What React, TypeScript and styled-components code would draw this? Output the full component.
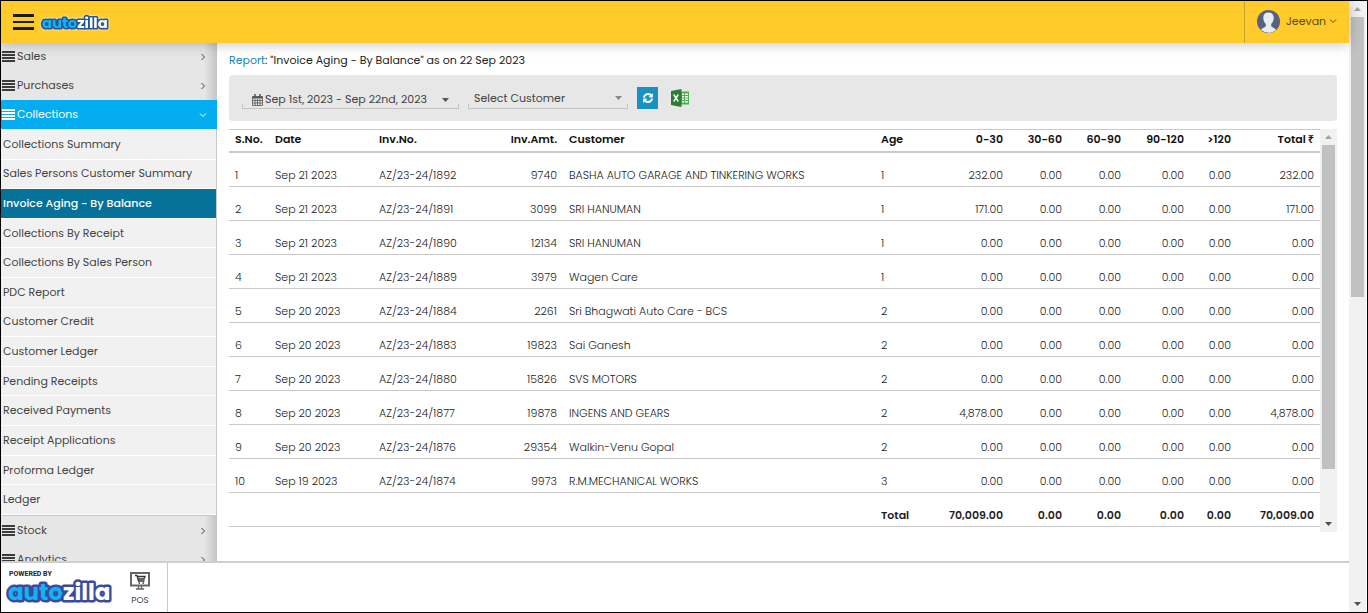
import React from 'react';
import styled, { createGlobalStyle, css } from 'styled-components';

const Global = createGlobalStyle`
  * { box-sizing: border-box; }
  body { margin: 0; background: #fff; font-family: Poppins, Inter, sans-serif; color: #444; }
  button, select { font: inherit; color: inherit; background: none; border: 0; padding: 0; margin: 0; }
  a { color: inherit; text-decoration: none; }
  ul { list-style: none; margin: 0; padding: 0; }
`;

const Page = styled.div`
  display: flex;
  height: 100vh;
  border: 1px solid #000;
  overflow: hidden;
`;
const Shell = styled.div`
  flex: 1;
  min-width: 0;
  display: flex;
  flex-direction: column;
`;
const Header = styled.header`
  flex: none;
  height: 42px;
  display: flex;
  align-items: center;
  gap: 6px;
  padding-left: 12px;
  background: #ffcb2b;
  box-shadow: 0 1px 12px rgba(0, 0, 0, 0.25);
  z-index: 1;
`;
const IconButton = styled.button`
  display: flex;
  align-items: center;
`;
const UserButton = styled.button`
  margin-left: auto;
  height: 100%;
  width: 105px;
  display: flex;
  align-items: center;
  padding: 0 0 2px 12px;
  gap: 6px;
  border-left: 1px solid #c9a22b;
  font-size: 11px;
  color: #5c4c1c;
  svg:last-child { margin-left: -3px; }
`;
const Body = styled.div`
  flex: 1;
  min-height: 0;
  display: flex;
`;
const Sidebar = styled.nav`
  flex: none;
  width: 216px;
  overflow: hidden;
`;
const Menu = styled.div`
  margin-top: -1px;
`;
const Group = styled.button<{ $open?: boolean }>`
  width: 100%;
  height: 29px;
  display: flex;
  align-items: center;
  gap: 2px;
  padding: 0 10px 0 1px;
  font-size: 11px;
  color: ${p => (p.$open ? '#fff' : '#444')};
  background: ${p => (p.$open ? '#03adf0' : 'linear-gradient(to right, #e6e6e6 94%, #c4c4c4)')};
  svg:last-child { margin-left: auto; }
`;
const SubList = styled.ul`
  height: 387px;
  padding-top: 1px;
  display: flex;
  flex-direction: column;
  background: #f1f1f1;
  border-right: 1px solid #c8c8c8;
  border-bottom: 1px solid #c8c8c8;
`;
const SubItem = styled.li<{ $active?: boolean }>`
  flex: 1;
  border-bottom: 1px solid #fff;
  ${p => p.$active && css`background: #067199; color: #fff; font-weight: 500;`}
`;
const SubLink = styled.a`
  display: flex;
  align-items: center;
  height: 100%;
  padding-left: 2px;
  font-size: 11px;
`;
const Main = styled.main`
  flex: 1;
  min-width: 0;
  padding: 8px 12px 0;
`;
const Title = styled.h1`
  margin: 0 0 6px;
  font-size: 11px;
  line-height: 18px;
  font-weight: 400;
  color: #222;
  a { color: #1583b5; }
`;
const Filters = styled.form`
  height: 46px;
  display: flex;
  align-items: center;
  padding-left: 13px;
  background: #e7e7e7;
  border-radius: 4px;
  font-size: 11px;
`;
const fieldEdge = css`
  border: 1px solid #c4c4c4;
  border-top: 0;
  border-image: linear-gradient(to top, #c4c4c4 5px, transparent 5px) 1;
`;
const DateButton = styled.button`
  ${fieldEdge}
  width: 217px;
  height: 22px;
  margin-right: 9px;
  display: flex;
  align-items: center;
  gap: 2px;
  padding: 4px 9px 0;
  white-space: nowrap;
  svg:last-child { margin-left: auto; }
`;
const SelectWrap = styled.label`
  ${fieldEdge}
  width: 160px;
  height: 22px;
  margin-right: 9px;
  display: flex;
  align-items: center;
  padding: 0 5px;
`;
const CustomerSelect = styled.select`
  flex: 1;
  appearance: none;
  outline: none;
`;
const RefreshButton = styled(IconButton)`
  width: 21px;
  height: 22px;
  margin-right: 13px;
  justify-content: center;
  background: #1891c3;
`;
const Report = styled.div`
  display: flex;
  align-items: flex-start;
  margin-top: 8px;
`;
const Table = styled.table`
  flex: 1;
  min-width: 0;
  table-layout: fixed;
  border-collapse: separate;
  border-spacing: 0;
  font-size: 11px;
  font-weight: 300;
  color: #222;
`;
const cell = css<{ $num?: boolean }>`
  text-align: ${p => (p.$num ? 'right' : 'left')};
  white-space: nowrap;
`;
const Th = styled.th<{ $num?: boolean }>`
  ${cell}
  height: 24px;
  padding: 0 6px 3px;
  line-height: 16px;
  border-top: 1px solid #c8c8c8;
  border-bottom: 2px solid #c8c8c8;
  font-weight: 600;
  color: #111;
`;
const Td = styled.td<{ $num?: boolean; $total?: boolean }>`
  ${cell}
  height: 34px;
  padding: 10px 6px 0;
  line-height: 16px;
  border-bottom: 1px solid #c8c8c8;
  ${p => p.$total && css`font-weight: 600;`}
`;
const Rupee = styled.span`
  margin-left: 2px;
  font-family: "Noto Sans", sans-serif;
`;
const PageScroll = styled.div`
  flex: none;
  width: 17px;
  margin-right: 1px;
  display: flex;
  flex-direction: column;
  align-items: center;
  background: #f1f1f1;
`;
const TableScroll = styled(PageScroll)`
  height: 403px;
  margin-right: 0;
`;
const Arrow = styled.button`
  height: 16px;
  display: flex;
  align-items: center;
`;
const Thumb = styled.div<{ $share: number }>`
  width: 13px;
  flex: ${p => p.$share} 0 0;
  background: #c1c1c1;
`;
const Rest = styled.div<{ $share: number }>`
  flex: ${p => p.$share} 0 0;
`;
const Footer = styled.footer`
  flex: none;
  height: 51px;
  display: flex;
  border-top: 2px solid #cfcfcf;
  background: #fff;
`;
const Brand = styled.div`
  padding: 7px 0 0 4px;
  width: 112px;
`;
const Powered = styled.div`
  padding-left: 4px;
  font: 700 7px/9px Roboto, sans-serif;
  color: #222;
`;
const Pos = styled.a`
  width: 55px;
  display: flex;
  flex-direction: column;
  align-items: center;
  gap: 4px;
  padding-top: 9px;
  border-right: 1px solid #c8c8c8;
  font-size: 9px;
  line-height: 12px;
`;
const LogoSvg = styled.svg<{ $glow?: boolean }>`
  display: block;
  overflow: visible;
  ${p => p.$glow && css`filter: drop-shadow(0 0 1px #fff);`}
`;

const Logo = ({ width, height, edge, glow }: { width: number; height: number; edge: string; glow?: boolean }) => (
  <LogoSvg $glow={glow} width={width} height={height} viewBox="0 0 106 26" aria-label="autozilla" role="img">
    <text x="3" y="21" fontFamily="Poppins, Lato" fontWeight="700" fontSize="23" stroke={edge} strokeWidth="5" strokeLinejoin="round" paintOrder="stroke">
      <tspan fill="#10b4f2">auto</tspan><tspan fill="#fff">zilla</tspan>
    </text>
  </LogoSvg>
);
const Bars = ({ color }: { color: string }) => (
  <svg width="13" height="11" viewBox="0 0 13 11" fill={color}>
    <path d="M0 0h13v2H0zM0 3h13v2H0zM0 6h13v2H0zM0 9h13v2H0z" />
  </svg>
);
const Chevron = ({ down }: { down?: boolean }) => (
  <svg width="8" height="8" viewBox="0 0 8 8" fill="none" stroke="currentColor">
    <path d={down ? 'M1 2.500 4 5.500 7 2.500' : 'M2.500 1 5.500 4 2.500 7'} />
  </svg>
);
const Caret = ({ color = '#555', up }: { color?: string; up?: boolean }) => (
  <svg width="7" height="4" viewBox="0 0 8 4" preserveAspectRatio="none" fill={color}>
    <path d={up ? 'M0 4 4 0 8 4z' : 'M0 0h8L4 4z'} />
  </svg>
);
const Avatar = () => (
  <svg width="23" height="23" viewBox="0 0 23 23">
    <circle cx="11.500" cy="11.500" r="11.500" fill="#566184" />
    <path d="M11.500 2.500c-3.600 0-5.500 2.300-5.200 5.500.1 2.500 1 4.500 2.500 6v2.300c-1 1-3 1.500-5 3.500a11.500 11.500 0 0 0 15.400 0c-2-2-4-2.500-5-3.500V14c1.500-1.500 2.400-3.500 2.500-6 .3-3.200-1.600-5.500-5.200-5.500z" fill="#e8eeee" />
  </svg>
);
const Calendar = () => (
  <svg width="11" height="12" viewBox="0 0 11 12" fill="none" stroke="#555">
    <path d="M.5 2.500h10v9H.5zM.5 6.500h10M.5 9h10M3 5v6.500M5.500 5v6.500M8 5v6.500" strokeWidth=".8" />
    <path d="M.5 3.500h10" strokeWidth="2" />
    <path d="M3 0v3M8 0v3" strokeWidth="1.500" />
  </svg>
);
const Refresh = () => (
  <svg width="10" height="10" viewBox="0 0 512 512" fill="#fff" stroke="#fff" strokeWidth="24">
    <path d="M370.700 133.300C339.500 104 298.900 88 255.800 88c-77.500.1-144.300 53.200-162.800 126.900-1.300 5.400-6.100 9.200-11.700 9.200H24.100c-7.500 0-13.200-6.800-11.800-14.200C33.900 94.900 134.800 8 256 8c66.400 0 126.800 26.100 171.300 68.700L463 41c15.100-15.100 41-4.400 41 17v134c0 13.300-10.700 24-24 24H345.900c-21.400 0-32.100-25.900-17-41zM32 296h134.100c21.400 0 32.100 25.900 17 41l-41.800 41.800c31.300 29.300 71.800 45.300 114.900 45.300 77.400-.1 144.300-53.100 162.800-126.900 1.300-5.400 6.100-9.200 11.700-9.200h57.300c7.500 0 13.200 6.800 11.800 14.200C478.100 417.100 377.200 504 256 504c-66.400 0-126.800-26.100-171.300-68.700L49 471c-15.100 15.100-41 4.400-41-17V320c0-13.300 10.700-24 24-24z" />
  </svg>
);
const Excel = () => (
  <svg width="18" height="18" viewBox="0 0 18 18">
    <path d="M9 2.500h9v13H9z" fill="#4caf50" />
    <path d="M11 4.500h2v1.500h-2zM14 4.500h3v1.500h-3zM11 7h2v1.500h-2zM14 7h3v1.500h-3zM11 9.500h2V11h-2zM14 9.500h3V11h-3zM11 12h2v1.500h-2zM14 12h3v1.500h-3z" fill="#fff" />
    <path d="M0 2 10.500 0v18L0 16z" fill="#2e7d32" />
    <path d="m2.700 5.500 4.600 7M7.300 5.500l-4.600 7" stroke="#fff" strokeWidth="1.500" />
  </svg>
);
const PosIcon = () => (
  <svg width="20" height="18" viewBox="0 0 20 18" fill="none" stroke="#666">
    <path d="M1 1h18v12.500H1z" strokeWidth="2" />
    <path d="M5 3.500h2l1.500 5.500h6M7.500 4.500h7.500l-1 2.500H8.500" strokeWidth="1.300" stroke="#333" />
    <path d="M8.500 11h1.500M12.500 11h1.500" strokeWidth="1.500" stroke="#333" />
    <path d="M8.500 14v3M11.500 14v3M6 17h8" strokeWidth="1.300" />
  </svg>
);

const links = ['Collections Summary', 'Sales Persons Customer Summary', 'Invoice Aging - By Balance', 'Collections By Receipt', 'Collections By Sales Person', 'PDC Report', 'Customer Credit', 'Customer Ledger', 'Pending Receipts', 'Received Payments', 'Receipt Applications', 'Proforma Ledger', 'Ledger'];
const columns: [string, number | undefined, boolean][] = [
  ['S.No.', 40, false], ['Date', 104, false], ['Inv.No.', 110, false], ['Inv.Amt.', 80, true], ['Customer', undefined, false], ['Age', 50, false],
  ['0-30', 84, true], ['30-60', 59, true], ['60-90', 59, true], ['90-120', 63, true], ['>120', 47, true], ['Total', 83, true],
];
const invoices = [
  ['Sep 21 2023', '1892', '9740', 'BASHA AUTO GARAGE AND TINKERING WORKS', '1', '232.00'],
  ['Sep 21 2023', '1891', '3099', 'SRI HANUMAN', '1', '171.00'],
  ['Sep 21 2023', '1890', '12134', 'SRI HANUMAN', '1', '0.00'],
  ['Sep 21 2023', '1889', '3979', 'Wagen Care', '1', '0.00'],
  ['Sep 20 2023', '1884', '2261', 'Sri Bhagwati Auto Care - BCS', '2', '0.00'],
  ['Sep 20 2023', '1883', '19823', 'Sai Ganesh', '2', '0.00'],
  ['Sep 20 2023', '1880', '15826', 'SVS MOTORS', '2', '0.00'],
  ['Sep 20 2023', '1877', '19878', 'INGENS AND GEARS', '2', '4,878.00'],
  ['Sep 20 2023', '1876', '29354', 'Walkin-Venu Gopal', '2', '0.00'],
  ['Sep 19 2023', '1874', '9973', 'R.M.MECHANICAL WORKS', '3', '0.00'],
];
const zeros = ['0.00', '0.00', '0.00', '0.00'];

const MenuGroup = ({ label, open }: { label: string; open?: boolean }) => (
  <Group type="button" $open={open} aria-expanded={!!open}>
    <Bars color={open ? '#fff' : '#3c3c3c'} />
    {label}
    <Chevron down={open} />
  </Group>
);

export default function App() {
  return (
    <>
      <Global />
      <Page>
        <Shell>
          <Header>
            <IconButton type="button" aria-label="Menu">
              <svg width="21" height="16" viewBox="0 0 21 16" fill="#1c1a12"><path d="M0 0h21v3H0zM0 7h21v2H0zM0 13h21v3H0z" /></svg>
            </IconButton>
            <Logo width={68} height={17} edge="#26529c" glow />
            <UserButton type="button"><Avatar />Jeevan<Chevron down /></UserButton>
          </Header>
          <Body>
            <Sidebar>
              <Menu>
                <MenuGroup label="Sales" />
                <MenuGroup label="Purchases" />
                <MenuGroup label="Collections" open />
                <SubList>
                  {links.map((l, i) => <SubItem key={l} $active={i === 2}><SubLink href="#">{l}</SubLink></SubItem>)}
                </SubList>
                <MenuGroup label="Stock" />
                <MenuGroup label="Analytics" />
              </Menu>
            </Sidebar>
            <Main>
              <Title><a href="#">Report</a>: "Invoice Aging - By Balance" as on 22 Sep 2023</Title>
              <Filters>
                <DateButton type="button"><Calendar />Sep 1st, 2023 - Sep 22nd, 2023<Caret /></DateButton>
                <SelectWrap>
                  <CustomerSelect aria-label="Customer"><option>Select Customer</option></CustomerSelect>
                  <Caret color="#888" />
                </SelectWrap>
                <RefreshButton type="button" aria-label="Refresh"><Refresh /></RefreshButton>
                <IconButton type="button" aria-label="Export to Excel"><Excel /></IconButton>
              </Filters>
              <Report>
                <Table>
                  <colgroup>{columns.map(([n, w]) => <col key={n} width={w} />)}</colgroup>
                  <thead>
                    <tr>{columns.map(([n, , num]) => <Th key={n} $num={num}>{n}{n === 'Total' && <Rupee>₹</Rupee>}</Th>)}</tr>
                  </thead>
                  <tbody>
                    {invoices.map(([date, no, amt, customer, age, due], i) => (
                      <tr key={no}>
                        {[String(i + 1), date, 'AZ/23-24/' + no, amt, customer, age, due, ...zeros, due].map((v, c) => <Td key={c} $num={columns[c][2]}>{v}</Td>)}
                      </tr>
                    ))}
                  </tbody>
                  <tfoot>
                    <tr>
                      <Td colSpan={5} />
                      <Td $total>Total</Td>
                      {['70,009.00', ...zeros, '70,009.00'].map((v, c) => <Td key={c} $num $total>{v}</Td>)}
                    </tr>
                  </tfoot>
                </Table>
                <TableScroll>
                  <Arrow type="button" aria-label="Scroll table up"><Caret up color="#a3a3a3" /></Arrow>
                  <Thumb $share={322} /><Rest $share={47} />
                  <Arrow type="button" aria-label="Scroll table down"><Caret color="#505050" /></Arrow>
                </TableScroll>
              </Report>
            </Main>
          </Body>
          <Footer>
            <Brand><Powered>POWERED BY</Powered><Logo width={106} height={26} edge="#3a4aa0" /></Brand>
            <Pos href="#"><PosIcon />POS</Pos>
          </Footer>
        </Shell>
        <PageScroll>
          <Arrow type="button" aria-label="Scroll page up"><Caret up color="#a3a3a3" /></Arrow>
          <Thumb $share={280} /><Rest $share={299} />
          <Arrow type="button" aria-label="Scroll page down"><Caret color="#505050" /></Arrow>
        </PageScroll>
      </Page>
    </>
  );
}
